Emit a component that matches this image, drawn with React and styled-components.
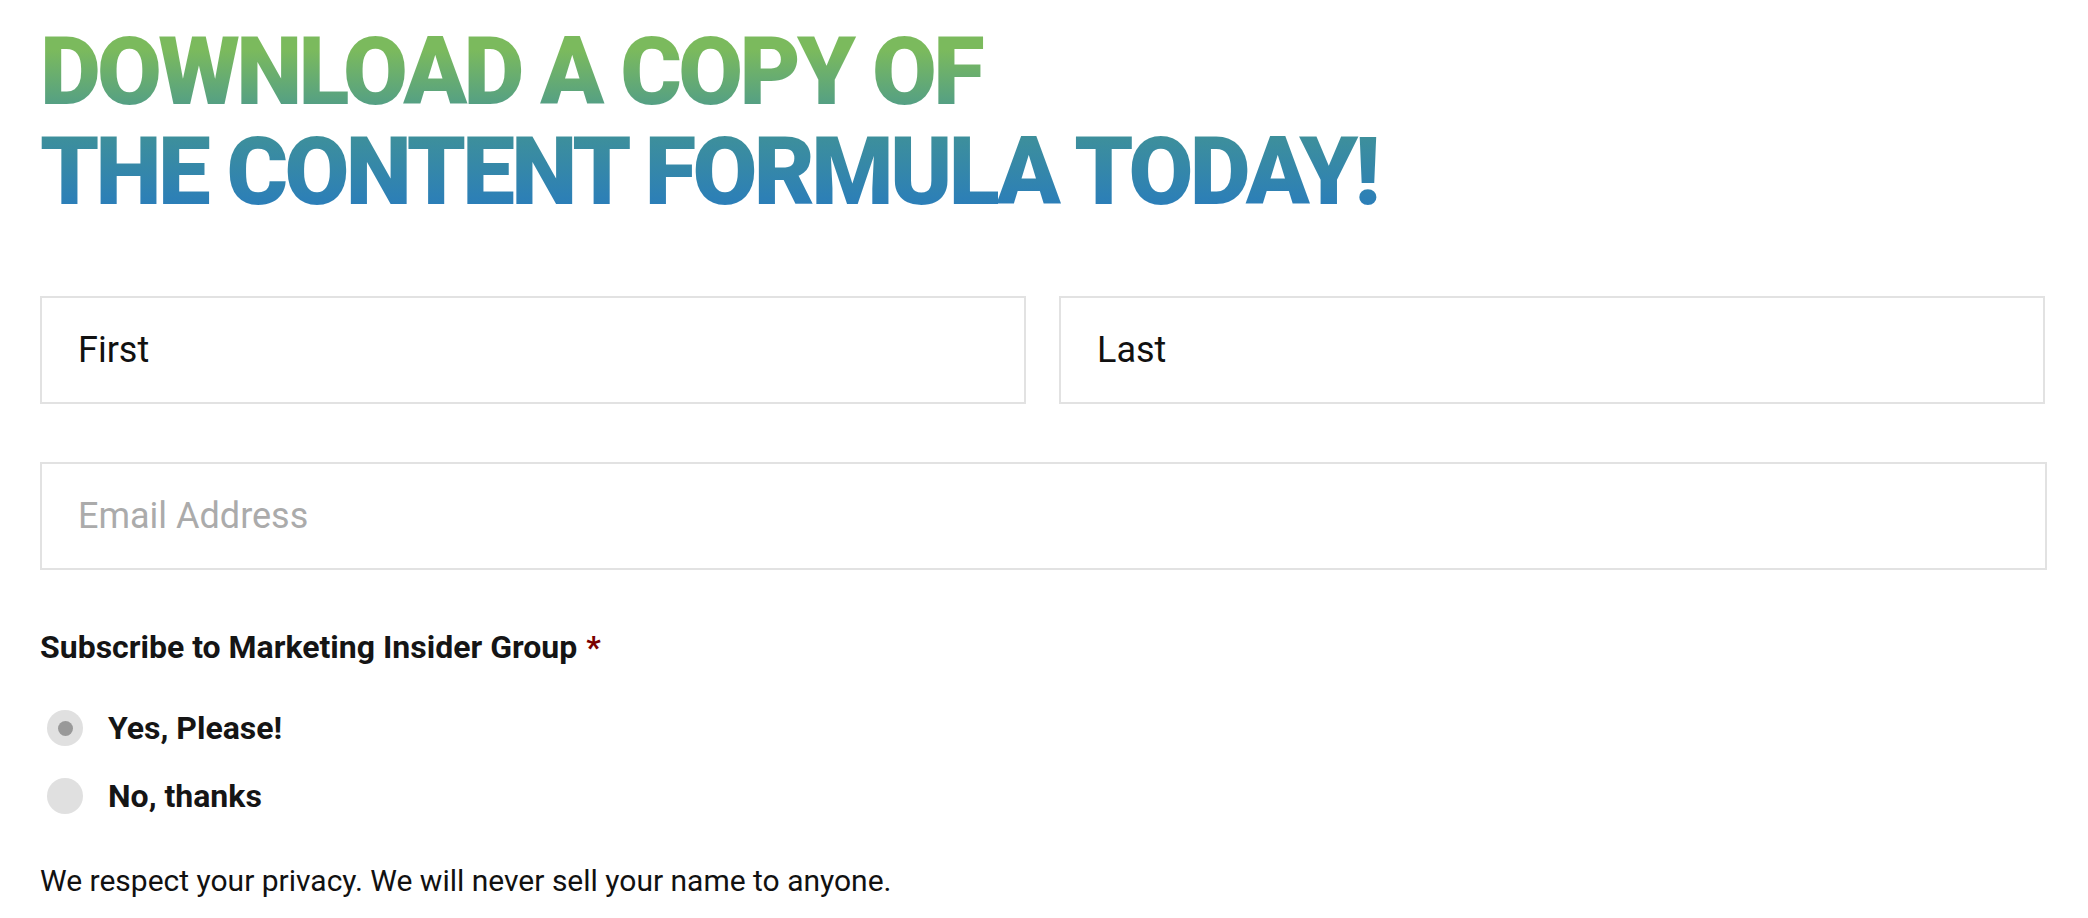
import React from "react";
import styled, { createGlobalStyle } from "styled-components";

const GlobalStyle = createGlobalStyle`
  html, body {
    margin: 0;
    padding: 0;
    background: #ffffff;
  }
  body {
    font-family: Roboto, "Liberation Sans", sans-serif;
    color: #111111;
  }
`;

const Page = styled.div`
  padding: 22px 41px 0 40px;
`;

const Heading = styled.h1`
  margin: 0;
  font-family: Roboto, "Liberation Sans", sans-serif;
  font-weight: 900;
  font-size: 94px;
  line-height: 100px;
  letter-spacing: -3.7px;
  text-transform: uppercase;
  display: inline-block;
  background: linear-gradient(180deg, #7bba5d 14%, #3d8f9c 58%, #2b7eb9 92%);
  -webkit-background-clip: text;
  background-clip: text;
  color: transparent;
`;

const Form = styled.form`
  margin-top: 74px;
  display: flex;
  flex-direction: column;
`;

const NameRow = styled.div`
  display: grid;
  grid-template-columns: 1fr 1fr;
  column-gap: 33px;
  padding-right: 2px;
`;

const TextField = styled.input`
  box-sizing: border-box;
  width: 100%;
  height: 108px;
  margin: 0;
  padding: 0 36px;
  border: 2px solid #e2e2e2;
  border-radius: 0;
  background: #ffffff;
  font-family: Roboto, "Liberation Sans", sans-serif;
  font-size: 36px;
  color: #111111;
  outline: none;

  &::placeholder {
    color: #ababab;
  }
`;

const EmailField = styled(TextField)`
  margin-top: 58px;
`;

const GroupLabel = styled.div`
  margin-top: 58px;
  font-size: 32px;
  line-height: 38px;
  font-weight: 700;
  color: #151515;
`;

const Required = styled.span`
  color: #7a0000;
  margin-left: 9px;
`;

const Options = styled.div`
  margin-top: 44px;
  display: flex;
  flex-direction: column;
  gap: 32px;
`;

const Option = styled.label`
  display: flex;
  align-items: center;
  gap: 25px;
  font-size: 32px;
  line-height: 36px;
  font-weight: 700;
  color: #151515;
  padding-left: 7px;
`;

const RadioDot = styled.span`
  box-sizing: border-box;
  width: 36px;
  height: 36px;
  border-radius: 50%;
  background: #e0e0e0;
  display: flex;
  align-items: center;
  justify-content: center;
  flex: none;

  &::after {
    content: "";
    width: 15px;
    height: 15px;
    border-radius: 50%;
    background: ${(p) => (p.$checked ? "#999999" : "transparent")};
  }
`;

const Privacy = styled.p`
  margin: 49px 0 0;
  font-size: 30px;
  line-height: 36px;
  color: #111111;
`;

const App = () => {
  return (
    <>
      <GlobalStyle />
      <Page>
        <Heading>
          Download a copy of
          <br />
          the content formula today!
        </Heading>
        <Form onSubmit={(e) => e.preventDefault()}>
          <NameRow>
            <TextField type="text" defaultValue="First" />
            <TextField type="text" defaultValue="Last" />
          </NameRow>
          <EmailField type="email" placeholder="Email Address" />
          <GroupLabel>
            Subscribe to Marketing Insider Group<Required>*</Required>
          </GroupLabel>
          <Options>
            <Option>
              <RadioDot $checked />
              Yes, Please!
            </Option>
            <Option>
              <RadioDot />
              No, thanks
            </Option>
          </Options>
          <Privacy>
            We respect your privacy. We will never sell your name to anyone.
          </Privacy>
        </Form>
      </Page>
    </>
  );
};

export default App;
